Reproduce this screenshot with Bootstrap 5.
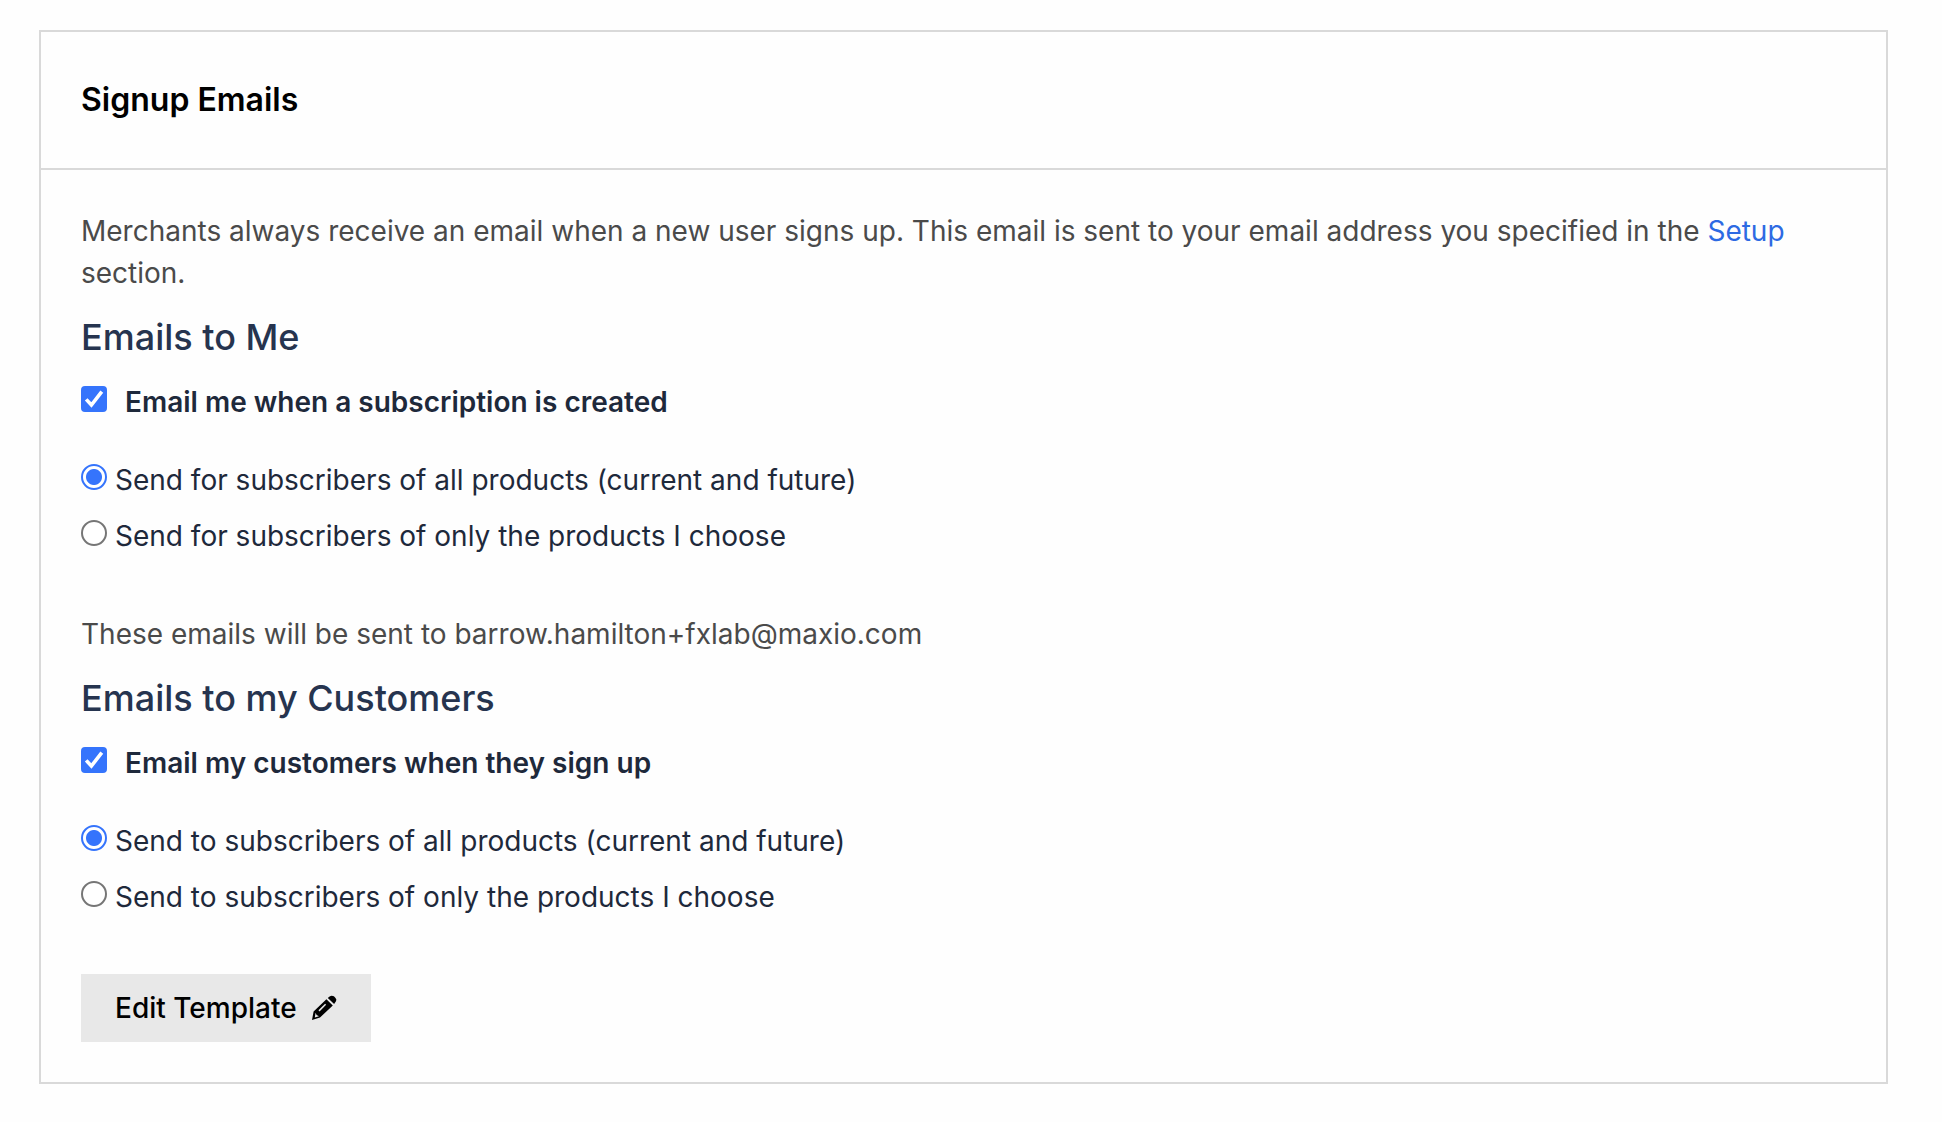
<!DOCTYPE html>
<html lang="en">
<head>
<meta charset="utf-8">
<meta name="viewport" content="width=device-width, initial-scale=1">
<title>Signup Emails</title>
<link href="https://cdn.jsdelivr.net/npm/bootstrap@5.3.0/dist/css/bootstrap.min.css" rel="stylesheet">
<style>
  body { font-family: Inter, "Liberation Sans", sans-serif; font-size: 28px; line-height: 42px; color: #1e293b; background: #fefefe; }
  main { padding: 30px 54px 38px 39px; }
  .panel { border: 2px solid #d9d9d9; background: #fefefe; }
  .panel-top { padding: 40px; border-bottom: 2px solid #d9d9d9; }
  .panel-top h1 { font-size: 32px; line-height: 56px; font-weight: 600; color: #000; }
  .panel-main { padding: 40px; }
  .note { color: #4a4a4a; }
  .note a { color: #2d6ae3; }
  h2.group-title { font-size: 36px; line-height: 44px; font-weight: 500; color: #26344f; margin: 21px 0 22px; }
  .option input { appearance: none; flex: none; width: 26px; height: 26px; margin: 5px 0 0; border: 2px solid #767676; background: #fff center / 22px no-repeat; }
  .option input[type=radio] { border-radius: 50%; }
  .option input[type=radio]:checked { border-color: #3574fc; background-image: radial-gradient(circle, #3574fc 7.5px, transparent 8.5px); }
  .option input[type=checkbox] { border-radius: 4px; }
  .option input[type=checkbox]:checked { border-color: #3574fc; background-color: #3574fc; background-image: url("data:image/svg+xml,%3Csvg xmlns='http://www.w3.org/2000/svg' viewBox='0 0 22 22'%3E%3Cpath d='M3.2 11.4 8.4 17 18.8 3.6' fill='none' stroke='%23fff' stroke-width='3.6'/%3E%3C/svg%3E"); }
  .option { gap: 8px; }
  .option-main { gap: 18px; font-weight: 600; margin-bottom: 36px; }
  .choices { gap: 14px; margin-bottom: 56px; border: 0; }
  .edit-btn { background: #e8e8e8; color: #000; border: 0; border-radius: 0; font-size: 28px; line-height: 42px; font-weight: 500; padding: 13px 34px; gap: 14px; }
</style>
</head>
<body>
<main>
  <section class="panel">
    <header class="panel-top"><h1 class="m-0">Signup Emails</h1></header>
    <form class="panel-main">
      <p class="note m-0">Merchants always receive an email when a new user signs up. This email is sent to your email address you specified in the <a class="text-decoration-none" href="#">Setup</a> section.</p>

      <h2 class="group-title">Emails to Me</h2>
      <div class="option option-main d-flex align-items-start">
        <input type="checkbox" id="me-on" checked>
        <label for="me-on">Email me when a subscription is created</label>
      </div>
      <div class="choices d-flex flex-column" role="radiogroup">
        <div class="option d-flex align-items-start">
          <input type="radio" name="me" id="me-all" checked>
          <label for="me-all">Send for subscribers of all products (current and future)</label>
        </div>
        <div class="option d-flex align-items-start">
          <input type="radio" name="me" id="me-some">
          <label for="me-some">Send for subscribers of only the products I choose</label>
        </div>
      </div>
      <p class="note m-0">These emails will be sent to barrow.hamilton+fxlab@maxio.com</p>

      <h2 class="group-title">Emails to my Customers</h2>
      <div class="option option-main d-flex align-items-start">
        <input type="checkbox" id="cust-on" checked>
        <label for="cust-on">Email my customers when they sign up</label>
      </div>
      <div class="choices d-flex flex-column" role="radiogroup">
        <div class="option d-flex align-items-start">
          <input type="radio" name="cust" id="cust-all" checked>
          <label for="cust-all">Send to subscribers of all products (current and future)</label>
        </div>
        <div class="option d-flex align-items-start">
          <input type="radio" name="cust" id="cust-some">
          <label for="cust-some">Send to subscribers of only the products I choose</label>
        </div>
      </div>
      <button type="button" class="btn edit-btn d-flex align-items-center">Edit Template
        <svg width="26" height="26" viewBox="0 0 26 26" aria-hidden="true">
          <path d="M15.4 4.2 21.8 10.4 9 22.6 1 25 2.6 16.6ZM16.8 3 18.6 1.4Q20.6 0 22.9 1.2 24.9 2.8 25.4 4.8 25.4 6.4 23.1 9Z" fill="#000"/>
          <path d="M8 15.9 14.6 9.3" fill="none" stroke="#e8e8e8" stroke-width="1.5"/>
          <path d="M4.6 17.8 5.6 20 8 21.2 3.8 22.4Z" fill="#e8e8e8"/>
        </svg>
      </button>
    </form>
  </section>
</main>
<script src="https://cdn.jsdelivr.net/npm/bootstrap@5.3.0/dist/js/bootstrap.bundle.min.js"></script>
</body>
</html>
